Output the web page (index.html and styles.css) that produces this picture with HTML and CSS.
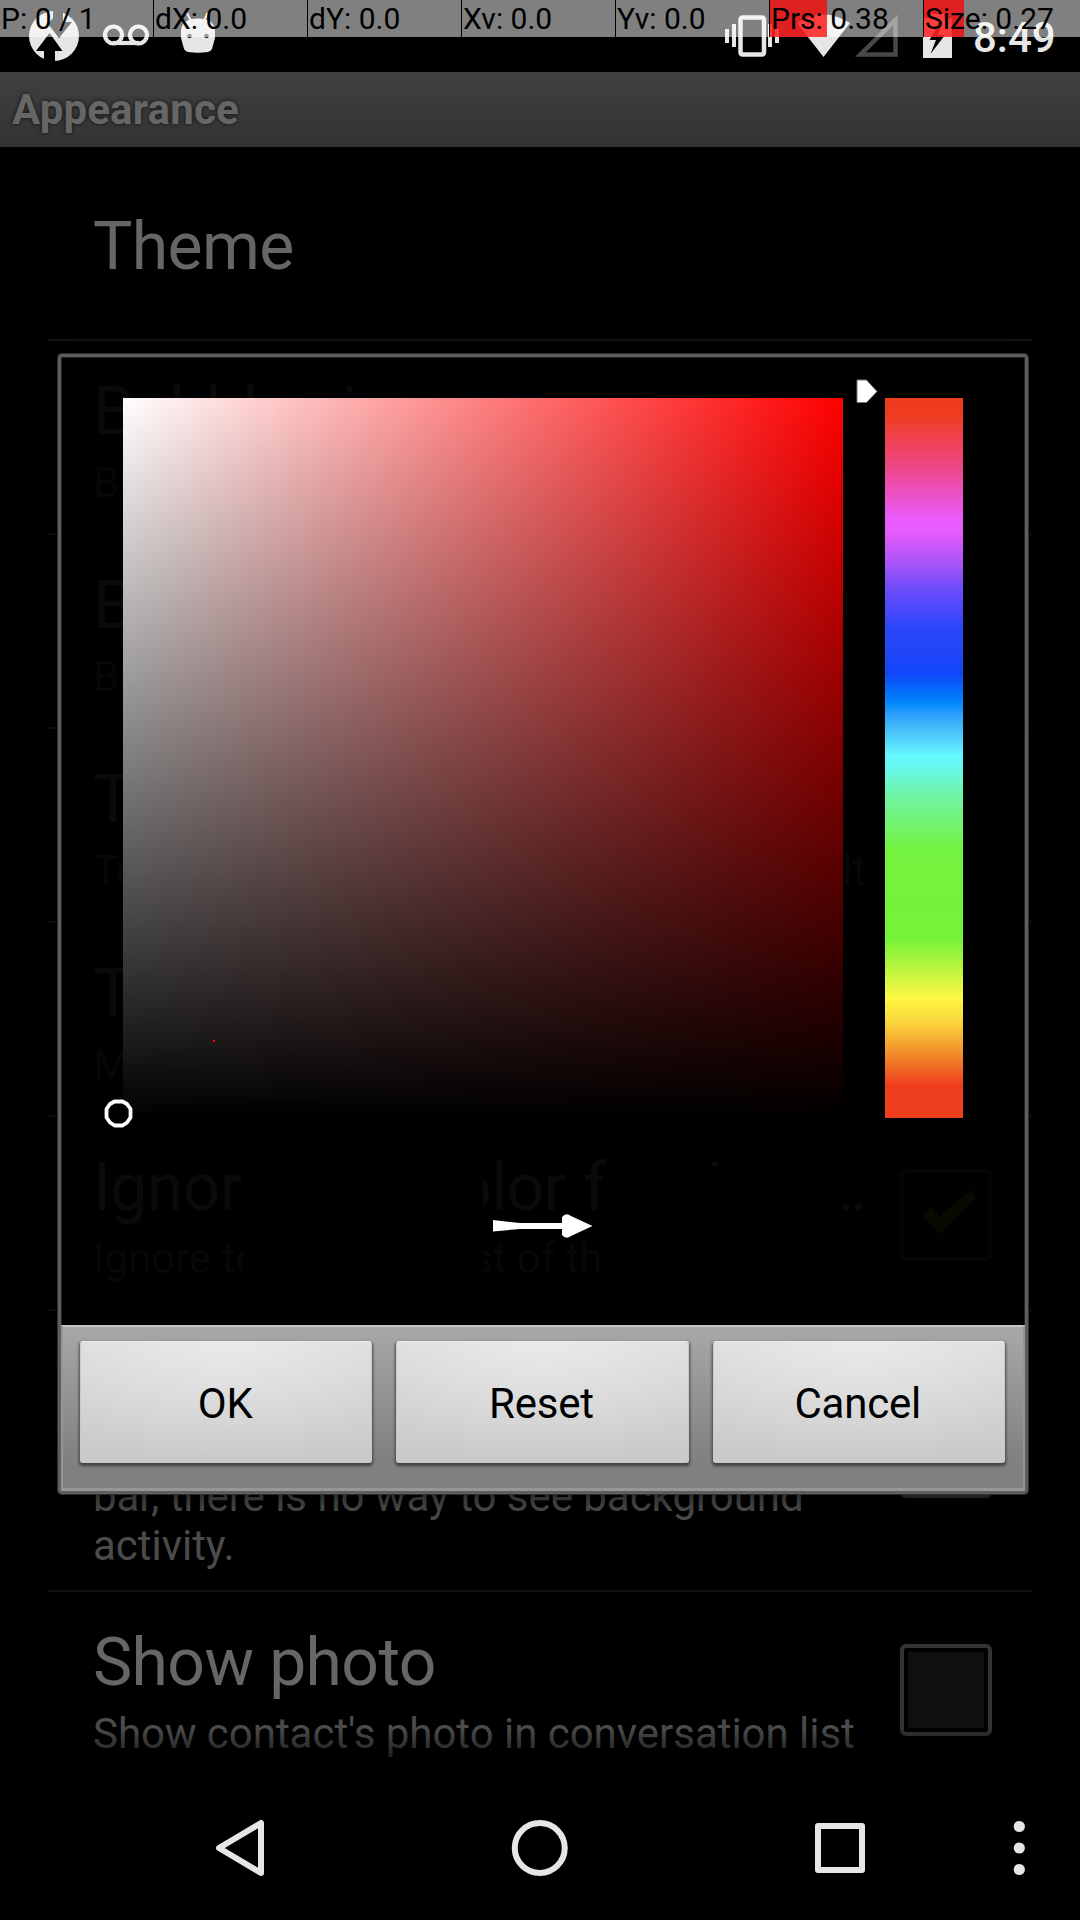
FILE: index.html
```html
<!DOCTYPE html>
<html lang="en">
<head>
<meta charset="utf-8">
<title>Appearance</title>
<link rel="stylesheet" href="styles.css">
</head>
<body>
<div class="screen">
  <header class="status">
    <svg class="status-icons" width="240" height="72" viewBox="0 0 240 72">
      <circle cx="54" cy="36" r="25" fill="#e6e6e6"/>
      <path d="M36 51L49.500 33L62.500 51H55V62H44V51ZM53 9H63V22H72L59 38L48 24L53 18Z" fill="#000"/>
      <g fill="none" stroke="#e6e6e6" stroke-width="4.200"><circle cx="113.500" cy="35" r="8.500"/><circle cx="138.500" cy="35" r="8.500"/><path d="M113 43H139"/></g>
      <path d="M187 13L191 21M207.500 13L204 21" stroke="#e6e6e6" stroke-width="2"/>
      <path d="M181 30C182 22 188 18.500 198 18.500S214 22 215 30V38L212 49Q211 51 208 52Q198 53.500 188 52Q185 51 184 49L181 38Z" fill="#e6e6e6"/>
      <circle cx="189.500" cy="36" r="2.300" fill="#333"/><circle cx="206.500" cy="36" r="2.300" fill="#333"/>
    </svg>
    <svg class="status-icons" width="250" height="72" viewBox="720 0 250 72">
      <g fill="#e6e6e6"><path d="M725 29h4v14h-4zM732 24h4v23h-4zM768 24h4v23h-4zM775 29h4v14h-4z"/>
      <path d="M797 23Q823.500 6 850 23L823.500 57Z"/>
      <path d="M923 18.500H931V14H944V18.500H952V58H923Z"/></g>
      <rect x="740.500" y="17.500" width="23.500" height="37" rx="2" fill="none" stroke="#e6e6e6" stroke-width="4.500"/>
      <path d="M860.500 54.500H895.500V20Z" fill="none" stroke="#484848" stroke-width="4.500"/>
      <path d="M939 23L929.500 40H936L930.500 54L945 35H938L942 23Z" fill="#000"/>
    </svg>
    <span class="clock">8:49</span>
  </header>
  <div class="title-bar">Appearance</div>
  <main class="list">
    <section class="row single"><div class="text"><h2>Theme</h2></div></section>
    <section class="row"><div class="text"><h2>Bubbles in</h2><p>Bubbles color</p></div></section>
    <section class="row"><div class="text"><h2>Bubbles out</h2><p>Bubbles color</p></div></section>
    <section class="row"><div class="text"><h2>Text color</h2><p class="spread"><span>Text color, long tap to set to</span><span>default</span></p></div></section>
    <section class="row"><div class="text"><h2>Text size</h2><p>Medium</p></div></section>
    <section class="row"><div class="text"><h2 class="spread"><span class="loose">Ignore text color for<span class="tail"> view</span></span><span>…</span></h2><p>Ignore text color in list of threads</p></div>
      <div class="check"><svg width="92" height="92" viewBox="900 1169 92 92"><path d="M970 1190L976 1198L940 1234L923 1216L931 1207L940 1217Z" fill="#536400"/></svg></div></section>
    <section class="row tall"><div class="text"><h2>Notification</h2><p>If there is no icon in the status<br>bar, there is no way to see background<br>activity.</p></div><div class="check"></div></section>
    <section class="row"><div class="text"><h2>Show photo</h2><p>Show contact's photo in conversation list</p></div><div class="check"></div></section>
  </main>
  <nav class="nav">
    <svg width="1080" height="144" viewBox="0 1776 1080 144" fill="none" stroke="#e6e6e6" stroke-width="6" stroke-linejoin="round">
      <path d="M219 1848L261 1823V1873Z"/><circle cx="539.750" cy="1848" r="25"/>
      <rect x="818" y="1826" width="44" height="44"/>
      <g fill="#e6e6e6" stroke="none"><circle cx="1019.300" cy="1826.500" r="5.600"/><circle cx="1019.300" cy="1848" r="5.600"/><circle cx="1019.300" cy="1869.500" r="5.600"/></g>
    </svg>
  </nav>

  <div class="dialog">
    <div class="picker">
      <div class="shade"></div>
      <div class="hue"></div>
      <svg class="marks" width="964" height="968" viewBox="61 357 964 968">
        <path d="M857 380H866.500L877 391.500L866.500 402.500H857Z" fill="#fff" stroke="#777" stroke-width="1"/>
        <path d="M114.500 1101.500H122.500L127 1104L130.500 1109V1117.500L127 1122.500L122.500 1125.500H114.500L110 1122.500L106.500 1117.500V1109L110 1104Z" fill="none" stroke="#fff" stroke-width="3.800" stroke-linejoin="round"/>
        <rect x="213" y="1040" width="2" height="2" fill="#f00"/>
      </svg>
    </div>
    <div class="compare">
      <div class="swatch"></div>
      <svg width="120" height="120" viewBox="483 1166 120 120"><path d="M493 1220L520 1223L562 1223V1217Q566 1212 571 1216L592.500 1226L571 1236Q566 1240 562 1235V1229L520 1229L493 1231.500Z" fill="#fff"/></svg>
      <div class="swatch"></div>
    </div>
    <div class="buttons"><button>OK</button><button>Reset</button><button>Cancel</button></div>
  </div>

  <div class="pointer-bar">
    <span>P: 0 / 1</span><span>dX: 0.0</span><span>dY: 0.0</span><span>Xv: 0.0</span><span>Yv: 0.0</span><span class="prs">Prs: 0.38</span><span class="size">Size: 0.27</span>
  </div>
</div>
</body>
</html>
```
FILE: styles.css
```css
* { box-sizing: border-box; }
body { margin: 0; background: #000; font-family: Roboto, sans-serif; }
svg { display: block; flex: none; }
.screen { position: relative; width: 1080px; height: 1920px; overflow: hidden; display: flex; flex-direction: column; background: #000; }
.status { height: 72px; flex: none; display: flex; }
.status-icons + .status-icons { margin-left: 480px; }
.clock { padding-left: 3px; color: #e6e6e6; font-size: 42px; font-weight: 500; line-height: 76px; white-space: nowrap; }
.title-bar { height: 75px; flex: none; padding-left: 12px; background: linear-gradient(#404040, #333); color: #666; font-size: 42px; font-weight: 700; letter-spacing: .15px; line-height: 76px; text-shadow: 0 0 4px rgba(0, 0, 0, .7); }

.list { position: relative; flex: 1; overflow: hidden; padding: 0 48px; }
.list::after { content: ""; position: absolute; left: 0; right: 0; bottom: 0; height: 48px; background: linear-gradient(transparent, #000); }
.row { height: 194px; display: flex; justify-content: space-between; padding: 31.5px 40px 0 45px; border-bottom: 2px solid #111; color: #666; }
.row.tall { height: 281px; padding-top: 26px; }
.row.single { padding-top: 61px; }
.text { white-space: nowrap; }
h2 { margin: 0 0 7.5px; font-size: 66px; font-weight: 400; line-height: 78px; letter-spacing: -.6px; }
p { margin: 0; font-size: 42px; line-height: 49.2px; letter-spacing: -.03px; color: #4b4b4b; }
.spread { width: 773px; display: flex; justify-content: space-between; }
.loose { word-spacing: 2.5px; }
.tail { margin-left: -8px; }
.check { width: 92px; height: 92px; flex: none; margin-top: 20.5px; border: 4px solid #333; border-radius: 6px; background: linear-gradient(#101010, #101010) center / 76px 76px no-repeat; }
.check svg { margin: -4px; }
.tall .check { margin-top: 69px; }

.nav { height: 144px; flex: none; }

.dialog { position: absolute; left: 58px; top: 354px; width: 970px; height: 1140px; border: 3px solid #5e5e5e; border-radius: 4px; background: rgba(0, 0, 0, .9); background-clip: padding-box; box-shadow: inset 0 0 0 1px #222, 0 0 0 1px #303030, 0 2px 24px rgba(0, 0, 0, .7); display: flex; flex-direction: column; }
.picker { position: relative; height: 809px; flex: none; display: flex; gap: 42px; padding: 41px 0 0 62px; }
.shade { width: 720px; height: 720px; background: linear-gradient(to top, #000, transparent), linear-gradient(to right, #fff, #f00); }
.hue { width: 78px; height: 720px; background: linear-gradient(#f03c1e 0%, #f03c1e 2.2%, #ee4788 9.6%, #e95cff 17%, #e65cfa 18.6%, #a855f8 23%, #6a4bfa 26.7%, #2a46fa 32%, #1e46f8 36%, #1046f8 38.2%, #0088fa 42.4%, #2ea0fb 44%, #4cc4fb 46.5%, #66f9ff 49.7%, #66f9f0 51.2%, #70f49c 55.7%, #74f240 62.8%, #74f338 75%, #fff844 83.4%, #fad03a 87%, #f28a2a 91.2%, #ef3e1e 95.5%, #ef3e1e 100%); }
.marks { position: absolute; left: 0; top: 0; }
.compare { height: 159px; flex: none; display: flex; padding-left: 182px; }
.swatch { width: 240px; height: 120px; background: #000; }
.buttons { height: 166px; flex: none; display: flex; gap: 24px; padding: 14px 18px 0 17px; background: linear-gradient(#a8a8a8, #808080 85%); border: 2px solid #969696; border-width: 2px 2px 3px; border-top-color: #c4c4c4; }
button { flex: 1; height: 122px; padding: 3px 2px 0 0; border: 1px solid #c9c9c9; border-top-color: #eee; border-radius: 3px; background: radial-gradient(ellipse 70% 100% at 50% 0, rgba(255, 255, 255, .4), transparent), linear-gradient(#dcdcdc, #c9c9c9); box-shadow: 0 2px 3px 1px rgba(40, 40, 40, .7); color: #000; font: 400 42px/117px Roboto, sans-serif; letter-spacing: -.2px; }

.pointer-bar { position: absolute; left: 0; top: 0; width: 1080px; height: 37px; display: grid; grid-template-columns: repeat(7, 154px); color: #000; font-size: 30px; line-height: 37px; }
.pointer-bar span { padding-left: 1px; border-right: 1px solid #000; background: rgba(255, 255, 255, .5); white-space: nowrap; }
.pointer-bar .size { width: 156px; border: 0; }
.pointer-bar .prs { background: linear-gradient(to right, rgba(255, 0, 0, .75) 57px, transparent 57px), rgba(255, 255, 255, .5); }
.pointer-bar .size { background: linear-gradient(to right, rgba(255, 0, 0, .75) 40px, transparent 40px), rgba(255, 255, 255, .5); }
```
